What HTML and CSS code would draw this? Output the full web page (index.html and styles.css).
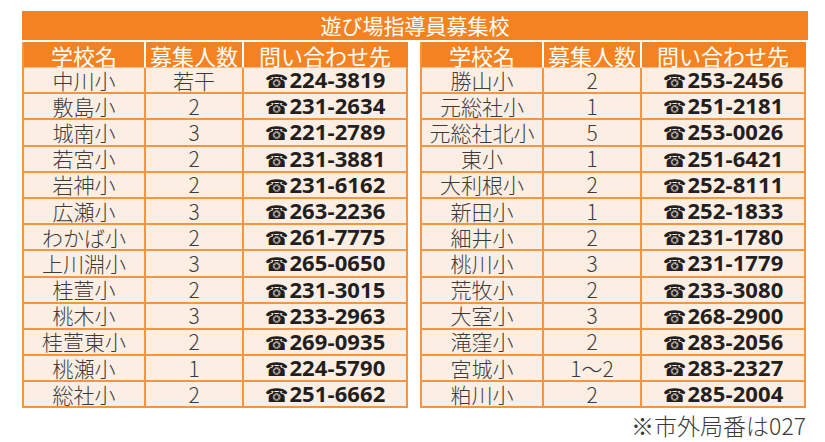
FILE: index.html
```html
<!DOCTYPE html>
<html lang="ja">
<head>
<meta charset="utf-8">
<title>遊び場指導員募集校</title>
<link rel="stylesheet" href="styles.css">
</head>
<body>
<div class="page">
  <div class="title">遊び場指導員募集校</div>
  <div class="tables">
    <table class="list">
      <colgroup><col class="c1"><col class="c2"><col class="c3"></colgroup>
      <thead><tr><th>学校名</th><th>募集人数</th><th>問い合わせ先</th></tr></thead>
      <tbody>
        <tr><td>中川小</td><td>若干</td><td class="tel"><span class="ph">☎</span>224-3819</td></tr>
        <tr><td>敷島小</td><td>2</td><td class="tel"><span class="ph">☎</span>231-2634</td></tr>
        <tr><td>城南小</td><td>3</td><td class="tel"><span class="ph">☎</span>221-2789</td></tr>
        <tr><td>若宮小</td><td>2</td><td class="tel"><span class="ph">☎</span>231-3881</td></tr>
        <tr><td>岩神小</td><td>2</td><td class="tel"><span class="ph">☎</span>231-6162</td></tr>
        <tr><td>広瀬小</td><td>3</td><td class="tel"><span class="ph">☎</span>263-2236</td></tr>
        <tr><td>わかば小</td><td>2</td><td class="tel"><span class="ph">☎</span>261-7775</td></tr>
        <tr><td>上川淵小</td><td>3</td><td class="tel"><span class="ph">☎</span>265-0650</td></tr>
        <tr><td>桂萱小</td><td>2</td><td class="tel"><span class="ph">☎</span>231-3015</td></tr>
        <tr><td>桃木小</td><td>3</td><td class="tel"><span class="ph">☎</span>233-2963</td></tr>
        <tr><td>桂萱東小</td><td>2</td><td class="tel"><span class="ph">☎</span>269-0935</td></tr>
        <tr><td>桃瀬小</td><td>1</td><td class="tel"><span class="ph">☎</span>224-5790</td></tr>
        <tr><td>総社小</td><td>2</td><td class="tel"><span class="ph">☎</span>251-6662</td></tr>
      </tbody>
    </table>
    <table class="list">
      <colgroup><col class="c1"><col class="c2"><col class="c3"></colgroup>
      <thead><tr><th>学校名</th><th>募集人数</th><th>問い合わせ先</th></tr></thead>
      <tbody>
        <tr><td>勝山小</td><td>2</td><td class="tel"><span class="ph">☎</span>253-2456</td></tr>
        <tr><td>元総社小</td><td>1</td><td class="tel"><span class="ph">☎</span>251-2181</td></tr>
        <tr><td>元総社北小</td><td>5</td><td class="tel"><span class="ph">☎</span>253-0026</td></tr>
        <tr><td>東小</td><td>1</td><td class="tel"><span class="ph">☎</span>251-6421</td></tr>
        <tr><td>大利根小</td><td>2</td><td class="tel"><span class="ph">☎</span>252-8111</td></tr>
        <tr><td>新田小</td><td>1</td><td class="tel"><span class="ph">☎</span>252-1833</td></tr>
        <tr><td>細井小</td><td>2</td><td class="tel"><span class="ph">☎</span>231-1780</td></tr>
        <tr><td>桃川小</td><td>3</td><td class="tel"><span class="ph">☎</span>231-1779</td></tr>
        <tr><td>荒牧小</td><td>2</td><td class="tel"><span class="ph">☎</span>233-3080</td></tr>
        <tr><td>大室小</td><td>3</td><td class="tel"><span class="ph">☎</span>268-2900</td></tr>
        <tr><td>滝窪小</td><td>2</td><td class="tel"><span class="ph">☎</span>283-2056</td></tr>
        <tr><td>宮城小</td><td>1～2</td><td class="tel"><span class="ph">☎</span>283-2327</td></tr>
        <tr><td>粕川小</td><td>2</td><td class="tel"><span class="ph">☎</span>285-2004</td></tr>
      </tbody>
    </table>
  </div>
  <div class="note">※市外局番は027</div>
</div>
</body>
</html>
```
FILE: styles.css
```css
html, body {
  margin: 0;
  padding: 0;
  background: #ffffff;
}
body {
  font-family: "Noto Sans CJK JP", "Noto Sans", sans-serif;
}
.page {
  width: 786px;
  padding: 11px 0 0 22px;
}
.title {
  height: 29px;
  line-height: 29px;
  background: #f58220;
  color: #ffffff;
  font-size: 21px;
  text-align: center;
  margin-bottom: 2px;
}
.tables {
  display: flex;
  gap: 12px;
}
.list {
  width: 386px;
  border-collapse: separate;
  border-spacing: 0;
  table-layout: fixed;
  border-left: 2px solid #f7953f;
}
.c1 { width: 122px; }
.c2 { width: 98px; }
.c3 { width: 164px; }
.list thead tr { height: 26px; }
.list tbody tr { height: 26.2px; }
.list th {
  background: #f58220;
  color: #ffffff;
  font-weight: 400;
  font-size: 22px;
  line-height: 22px;
  padding: 0;
  border-right: 2px solid #ffffff;
  border-bottom: 1px solid #f8b683;
}
.list th:last-child { border-right: 2px solid #f58220; }
.list td {
  background: #fdeee3;
  color: #3b3b3b;
  font-size: 21px;
  font-weight: 300;
  text-align: center;
  line-height: 21px;
  padding: 0;
  border-right: 2px solid #f7953f;
  border-bottom: 2px solid #f7953f;
}
.list td.tel {
  font-family: "Open Sans", "Noto Sans", sans-serif;
  font-weight: 700;
  font-size: 22px;
  color: #231f20;
  letter-spacing: 0.1px;
}
.ph {
  font-family: "DejaVu Sans", sans-serif;
  font-size: 19px;
  line-height: 1;
  margin-right: 1px;
}
.note {
  text-align: right;
  font-size: 23px;
  font-weight: 300;
  color: #3b3b3b;
  line-height: 28px;
  margin-top: 3px;
  padding-right: 2px;
}
```
